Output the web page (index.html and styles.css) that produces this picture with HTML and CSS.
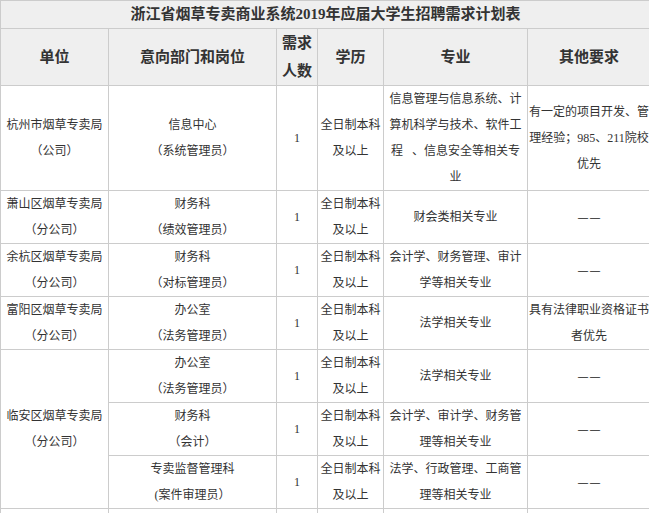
FILE: index.html
```html
<!DOCTYPE html>
<html lang="zh-CN">
<head>
<meta charset="utf-8">
<title>浙江省烟草专卖商业系统2019年应届大学生招聘需求计划表</title>
<link rel="stylesheet" href="styles.css">
</head>
<body>
<div class="wrap">
<table class="plan">
  <colgroup>
    <col class="c-unit">
    <col class="c-dept">
    <col class="c-num">
    <col class="c-edu">
    <col class="c-major">
    <col class="c-other">
  </colgroup>
  <thead>
    <tr class="title-row"><th colspan="6">浙江省烟草专卖商业系统2019年应届大学生招聘需求计划表</th></tr>
    <tr class="head-row">
      <th>单位</th>
      <th>意向部门和岗位</th>
      <th>需求<br>人数</th>
      <th>学历</th>
      <th>专业</th>
      <th>其他要求</th>
    </tr>
  </thead>
  <tbody>
    <tr>
      <td>杭州市烟草专卖局<br>（公司）</td>
      <td>信息中心<br>（系统管理员）</td>
      <td class="num">1</td>
      <td>全日制本科<br>及以上</td>
      <td>信息管理与信息系统、计<br>算机科学与技术、软件工<br>程 &nbsp; 、信息安全等相关专<br>业</td>
      <td>有一定的项目开发、管<br>理经验；985、211院校<br>优先</td>
    </tr>
    <tr>
      <td>萧山区烟草专卖局<br>（分公司）</td>
      <td>财务科<br>（绩效管理员）</td>
      <td class="num">1</td>
      <td>全日制本科<br>及以上</td>
      <td>财会类相关专业</td>
      <td><span class="dash">——</span></td>
    </tr>
    <tr>
      <td>余杭区烟草专卖局<br>（分公司）</td>
      <td>财务科<br>（对标管理员）</td>
      <td class="num">1</td>
      <td>全日制本科<br>及以上</td>
      <td>会计学、财务管理、审计<br>学等相关专业</td>
      <td><span class="dash">——</span></td>
    </tr>
    <tr>
      <td>富阳区烟草专卖局<br>（分公司）</td>
      <td>办公室<br>（法务管理员）</td>
      <td class="num">1</td>
      <td>全日制本科<br>及以上</td>
      <td>法学相关专业</td>
      <td>具有法律职业资格证书<br>者优先</td>
    </tr>
    <tr>
      <td rowspan="3">临安区烟草专卖局<br>（分公司）</td>
      <td>办公室<br>（法务管理员）</td>
      <td class="num">1</td>
      <td>全日制本科<br>及以上</td>
      <td>法学相关专业</td>
      <td><span class="dash">——</span></td>
    </tr>
    <tr>
      <td>财务科<br>（会计）</td>
      <td class="num">1</td>
      <td>全日制本科<br>及以上</td>
      <td>会计学、审计学、财务管<br>理等相关专业</td>
      <td><span class="dash">——</span></td>
    </tr>
    <tr>
      <td>专卖监督管理科<br>(案件审理员）</td>
      <td class="num">1</td>
      <td>全日制本科<br>及以上</td>
      <td>法学、行政管理、工商管<br>理等相关专业</td>
      <td><span class="dash">——</span></td>
    </tr>
    <tr class="next-row">
      <td></td>
      <td></td>
      <td></td>
      <td></td>
      <td></td>
      <td></td>
    </tr>
  </tbody>
</table>
</div>
</body>
</html>
```

FILE: styles.css
```css
html, body {
  margin: 0;
  padding: 0;
  background: #ffffff;
}

.wrap {
  width: 649px;
  overflow: hidden;
}

.plan {
  width: 650px;
  table-layout: fixed;
  border-collapse: collapse;
  font-family: "Liberation Serif", "Noto Sans CJK SC", sans-serif;
  color: #333333;
}

.c-unit { width: 108px; }
.c-dept { width: 168px; }
.c-num { width: 41px; }
.c-edu { width: 66px; }
.c-major { width: 144px; }
.c-other { width: 123px; }

.plan th,
.plan td {
  border: 1px solid #cccccc;
  padding: 0 1px;
  text-align: center;
  vertical-align: middle;
  white-space: nowrap;
}

.plan th {
  background: #efefef;
  font-weight: bold;
  font-size: 15px;
  color: #333333;
}

.title-row th {
  line-height: 27px;
}

.head-row th {
  line-height: 28px;
}

.plan td {
  font-size: 12px;
  line-height: 26px;
}

.plan .next-row td {
  height: 52px;
}

.dash {
  font-size: 10px;
  font-weight: bold;
  color: #222222;
  letter-spacing: 2px;
  margin-right: -2px;
}
```
